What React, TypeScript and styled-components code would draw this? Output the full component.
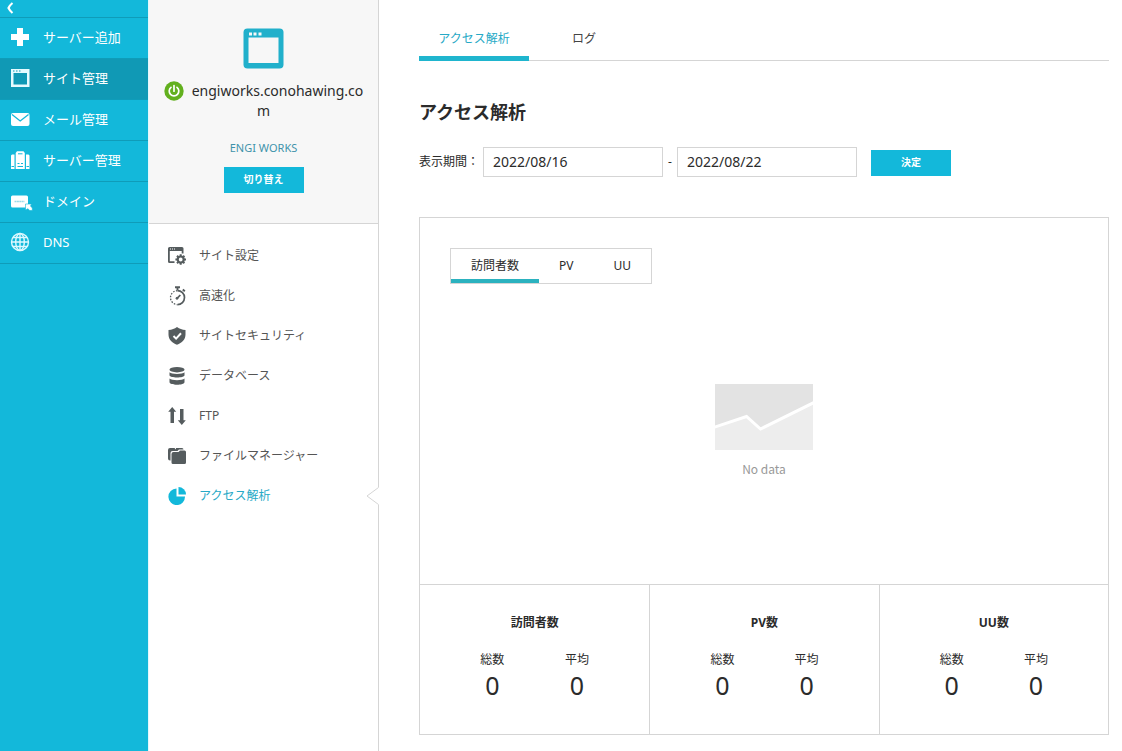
import React, { useState } from "react";
import styled, { createGlobalStyle, css } from "styled-components";

const cyan = "#13b8da";
const line = "#d5d5d5";

const GlobalStyle = createGlobalStyle`
  *, *::before, *::after { box-sizing: border-box; }
  body {
    margin: 0;
    background: #fff;
    color: #2b2b2b;
    font-family: "Noto Sans", "Noto Sans CJK JP", sans-serif;
    font-size: 12px;
    line-height: 20px;
  }
  button, input { font: inherit; color: inherit; }
  a { color: inherit; text-decoration: none; }
  svg { display: block; flex: none; }
  ul, h1, h2, dl, dd, p { margin: 0; padding: 0; }
  ul { list-style: none; }
`;

const Page = styled.div`
  display: flex;
  min-height: 100vh;
`;

const Sidebar = styled.nav`
  flex: none;
  width: 148px;
  background: ${cyan};
  color: #fff;
`;

const CollapseButton = styled.button`
  display: flex;
  align-items: center;
  width: 100%;
  height: 18px;
  padding: 0 6px 2px;
  border: 0;
  border-bottom: 1px solid #0f9cb9;
  background: none;
  color: #fff;
`;

const SidebarLink = styled.a<{ $active?: boolean }>`
  display: flex;
  align-items: center;
  gap: 12px;
  height: 41px;
  padding: 0 0 2px 10px;
  border-bottom: 1px solid #0f9cb9;
  background: ${(p) => (p.$active ? "#1099b5" : "transparent")};
  font-size: 13px;
`;

const SitePanel = styled.aside`
  flex: none;
  width: 231px;
  border-left: 1px solid #e3f8fd;
  border-right: 1px solid ${line};
`;

const SiteHeader = styled.header`
  display: flex;
  flex-direction: column;
  align-items: center;
  height: 224px;
  padding: 28px 12px 0;
  border-bottom: 1px solid ${line};
  background: #f7f7f7;
`;

const SiteName = styled.p`
  width: 100%;
  margin-top: 12px;
  font-size: 14px;
  text-align: center;
  word-break: break-all;
`;

const Power = styled.span`
  display: inline-block;
  margin-right: 8px;
  vertical-align: top;
`;

const Owner = styled.a`
  margin-top: 17px;
  color: #3f93ab;
  font-size: 11px;
`;

const SolidButton = styled.button`
  width: 80px;
  height: 26px;
  padding: 0 0 2px;
  border: 0;
  background: ${cyan};
  color: #fff;
  font-size: 10px;
  font-weight: 700;
`;

const SwitchButton = styled(SolidButton)`
  margin-top: 9px;
`;

const SiteMenu = styled.ul`
  padding-top: 12px;
`;

const SiteMenuItem = styled.li`
  position: relative;
`;

const SiteMenuLink = styled.a<{ $active?: boolean }>`
  display: flex;
  align-items: center;
  gap: 13px;
  height: 40px;
  padding-left: 19px;
  color: ${(p) => (p.$active ? "#27a9c6" : "#555")};

  svg { color: ${(p) => (p.$active ? cyan : "#555c5e")}; }
`;

const Notch = styled.svg`
  position: absolute;
  top: 10px;
  right: -1px;
`;

const Main = styled.main`
  flex: 1;
  min-width: 0;
  padding: 16px 13px 16px 40px;
`;

const Tabs = styled.nav`
  display: flex;
  height: 45px;
  border-bottom: 1px solid ${line};
`;

const Tab = styled.a<{ $active?: boolean }>`
  width: 110px;
  height: 45px;
  line-height: 46px;
  text-align: center;
  color: #444;
  ${(p) =>
    p.$active &&
    css`
      color: #27a9c6;
      border-bottom: 5px solid #1fb5ce;
    `}
`;

const Title = styled.h1`
  margin-top: 38px;
  font-size: 18px;
  line-height: 26px;
`;

const PeriodForm = styled.form`
  display: flex;
  align-items: center;
  margin-top: 22px;
`;

const PeriodLabel = styled.label`
  width: 64px;
`;

const DateInput = styled.input`
  width: 180px;
  height: 30px;
  padding: 0 9px 2px;
  border: 1px solid ${line};
  background: #fff;
  font-size: 14px;
`;

const Dash = styled.span`
  width: 14px;
  text-align: center;
`;

const SubmitButton = styled(SolidButton)`
  margin: 2px 0 0 14px;
`;

const Card = styled.section`
  margin-top: 40px;
  border: 1px solid ${line};
`;

const ChartArea = styled.div`
  height: 366px;
  padding: 30px;
`;

const MetricTabs = styled.div`
  display: inline-flex;
  height: 36px;
  border: 1px solid ${line};
`;

const MetricTab = styled.button<{ $active: boolean }>`
  padding: 0 20px;
  border: 0;
  border-top: 4px solid transparent;
  border-bottom: 4px solid ${(p) => (p.$active ? "#2bb2bf" : "transparent")};
  background: none;
`;

const Empty = styled.div`
  display: flex;
  flex-direction: column;
  align-items: center;
  gap: 9px;
  margin-top: 100px;
  color: #999;
  font-family: "Noto Sans CJK JP", sans-serif;
`;

const Stats = styled.div`
  display: grid;
  grid-template-columns: repeat(3, 1fr);
  border-top: 1px solid ${line};
`;

const Stat = styled.section`
  padding: 28px 30px 34px;
  text-align: center;

  & + & { border-left: 1px solid ${line}; }
`;

const StatTitle = styled.h2`
  font-size: 12px;
  line-height: 20px;
`;

const StatValues = styled.dl`
  display: grid;
  grid-template-columns: 1fr 1fr;
  margin-top: 17px;
`;

const StatNumber = styled.dd`
  font-size: 25px;
  line-height: 30px;
`;

const PlusIcon = () => (
  <svg width="21" height="20" viewBox="0 0 21 20" aria-hidden="true">
    <path d="M7 1h6v6h6v6h-6v6H7v-6H1V7h6z" fill="#fff" />
  </svg>
);

const WindowIcon = () => (
  <svg width="21" height="20" viewBox="0 0 21 20" aria-hidden="true">
    <path fillRule="evenodd" d="M1 1h18.500v18H1zM3.500 5v11.500H17V5z" fill="#e6fbff" />
    <path d="M3 3h1.500M6 3h1.500M9 3h1.500" stroke="#1099b5" strokeWidth="1.200" />
  </svg>
);

const MailIcon = () => (
  <svg width="21" height="20" viewBox="0 0 21 20" aria-hidden="true">
    <rect x="1" y="4" width="18.500" height="13" rx="2" fill="#fff" />
    <path d="M2 5.500l8.200 6.500 8.300-6.500" fill="none" stroke={cyan} strokeWidth="1.300" />
  </svg>
);

const ServerIcon = () => (
  <svg width="21" height="20" viewBox="0 0 21 20" aria-hidden="true">
    <path d="M7 1.200h6.500l1.300 1.800v16H5.700V3zM1 5.500l1-1h2.500V19H1zM16 4.500h2.500l1 1V19H16z" fill="#fff" />
    <path d="M8 3.800h4.500M7.500 13.500h2M11 13.500h2M7.500 16.500h5.500M1.500 16.500h2.500M16.500 16.500H19" stroke={cyan} strokeWidth="1" />
  </svg>
);

const DomainIcon = () => (
  <svg width="21" height="20" viewBox="0 0 21 20" overflow="visible" aria-hidden="true">
    <rect x="1" y="4.500" width="17" height="12" rx="1.500" fill="#fff" />
    <path d="M4.500 10.500H14.500" fill="none" stroke="#9adbe8" strokeWidth="1.300" strokeDasharray="2 .400" />
    <path d="M15.500 13h6l-1 2 1.800 2v2.500h-2.500l-2-1.800-2.300 1.300z" fill="#fff" stroke={cyan} strokeWidth=".600" />
  </svg>
);

const GlobeIcon = () => (
  <svg width="21" height="20" viewBox="0 0 21 20" fill="none" stroke="#dff9ff" strokeWidth="1.400" aria-hidden="true">
    <circle cx="10" cy="10" r="8.500" />
    <ellipse cx="10" cy="10" rx="4.300" ry="8.500" />
    <path d="M10 1.500v17M1.500 10h17M3 5.500h14M3 14.500h14" />
  </svg>
);

const SiteIcon = () => (
  <svg width="41" height="41" viewBox="0 0 41 41" aria-hidden="true">
    <rect x=".500" y=".500" width="40" height="40" rx="4" fill="#21b0cb" />
    <path d="M5.500 9.500h30V35h-30z" fill="#f7f7f7" />
    <path d="M6 4.500h3v3H6zM10.500 4.500h3v3h-3zM15.500 4.500h3v3h-3z" fill="#f7f7f7" />
  </svg>
);

const PowerIcon = () => (
  <svg width="20" height="20" viewBox="0 0 20 20" aria-hidden="true">
    <circle cx="10" cy="10" r="9.700" fill="#62b01e" />
    <path d="M7 6.300a4.800 4.800 0 1 0 6 0M10 4.500v5.700" fill="none" stroke="#fff" strokeWidth="1.700" strokeLinecap="round" />
  </svg>
);

const GearWindowIcon = () => (
  <svg width="18" height="18" viewBox="0 0 18 18" overflow="visible" fill="currentColor" aria-hidden="true">
    <path d="M0 1.500Q0 0 1.500 0H14q1.500 0 1.500 1.500V6.500h-1.800V4H1.800V14.200h4.700V16h-5Q0 16 0 14.500z" />
    <path d="M2 2h1M4 2h1M6 2h1" stroke="#fff" />
    <circle cx="12.700" cy="12.500" r="3" fill="none" stroke="currentColor" strokeWidth="2.200" />
    <path d="M12.700 7.200v2M12.700 15.800v2M7.400 12.500h2M16 12.500h2M9 8.800l1.300 1.300M15.100 14.900l1.300 1.300M16.400 8.800l-1.300 1.300M10.300 14.900L9 16.200" stroke="currentColor" strokeWidth="2" />
  </svg>
);

const StopwatchIcon = () => (
  <svg width="18" height="18" viewBox="0 0 18 18" overflow="visible" fill="none" stroke="currentColor" aria-hidden="true">
    <path d="M9.500 3.600a7 7 0 0 1 0 14" strokeWidth="1.700" />
    <path d="M9.500 3.600a7 7 0 0 0 0 14" strokeWidth="1.300" strokeDasharray="1.600 1.400" />
    <path d="M7 .3h5M9.500 0v3M14.800 2.500l2 1.800" strokeWidth="1.900" />
    <path d="M12.300 8L9 11.500" strokeWidth="1.800" />
    <circle cx="9" cy="11.300" r="1" fill="currentColor" />
  </svg>
);

const ShieldIcon = () => (
  <svg width="18" height="18" viewBox="0 0 18 18" aria-hidden="true">
    <path d="M9 0c2.500 1.800 5 2.700 8.500 3v4.500c0 5-3.500 8.200-8.500 10.300C4 15.700.5 12.500.5 7.500V3C4 2.700 6.500 1.800 9 0z" fill="currentColor" />
    <path d="M5.500 9l2.600 2.600L13 6.300" fill="none" stroke="#fff" strokeWidth="2" />
  </svg>
);

const DatabaseIcon = () => (
  <svg width="18" height="18" viewBox="0 0 18 18" fill="currentColor" aria-hidden="true">
    <ellipse cx="9" cy="2.700" rx="7.500" ry="2.700" />
    <path d="M1.500 5.200c2 2.300 13 2.300 15 0v3c0 3-15 3-15 0zM1.500 11.500c2 2.300 13 2.300 15 0v3.500c0 3.700-15 3.700-15 0z" />
  </svg>
);

const TransferIcon = () => (
  <svg width="18" height="18" viewBox="0 0 18 18" fill="currentColor" aria-hidden="true">
    <path d="M4.200 0l4 4.700H6V16H2.500V4.700H.2zM13.800 18l-4-4.700H12V2h3.500v11.300h2.300z" />
  </svg>
);

const FoldersIcon = () => (
  <svg width="18" height="18" viewBox="0 0 18 18" fill="currentColor" aria-hidden="true">
    <path d="M0 3Q0 1 2 1h4.500l1.500 1.500V1H14q1.500 0 1.500 1.500H11L9.500 4H4.500Q2.500 4 2.500 6v7.500H2Q0 13.500 0 11.500z" />
    <path d="M3.500 7q0-2 2-2h5L12 3.500h4.500Q18 3.500 18 5v10.500q0 1.500-1.500 1.500H5q-1.500 0-1.500-1.500z" />
  </svg>
);

const PieIcon = () => (
  <svg width="18" height="18" viewBox="0 0 18 18" fill="currentColor" aria-hidden="true">
    <path d="M8.500 1.500v8H17A8.300 8.300 0 1 1 8.500 1.500z" />
    <path d="M10.500 0A7.500 7.500 0 0 1 18 7.500h-7.500z" />
  </svg>
);

const NoDataGraphic = () => (
  <svg width="98" height="66" viewBox="0 0 98 66" aria-hidden="true">
    <path d="M0 0h98v66H0z" fill="#e3e3e3" />
    <path d="M0 43l31-10 14 12 53-26v47H0z" fill="#ededed" />
    <path d="M-1 43.300L31.500 32.500 45.500 45 99 18.500" fill="none" stroke="#fff" strokeWidth="3" />
  </svg>
);

const services = [
  { label: "サーバー追加", icon: <PlusIcon /> },
  { label: "サイト管理", icon: <WindowIcon />, active: true },
  { label: "メール管理", icon: <MailIcon /> },
  { label: "サーバー管理", icon: <ServerIcon /> },
  { label: "ドメイン", icon: <DomainIcon /> },
  { label: "DNS", icon: <GlobeIcon /> },
];

const siteMenu = [
  { label: "サイト設定", icon: <GearWindowIcon /> },
  { label: "高速化", icon: <StopwatchIcon /> },
  { label: "サイトセキュリティ", icon: <ShieldIcon /> },
  { label: "データベース", icon: <DatabaseIcon /> },
  { label: "FTP", icon: <TransferIcon /> },
  { label: "ファイルマネージャー", icon: <FoldersIcon /> },
  { label: "アクセス解析", icon: <PieIcon />, active: true },
];

const metrics = ["訪問者数", "PV", "UU"];

const stats = [
  { title: "訪問者数", total: 0, average: 0 },
  { title: "PV数", total: 0, average: 0 },
  { title: "UU数", total: 0, average: 0 },
];

export default function App() {
  const [metric, setMetric] = useState(metrics[0]);
  const [from, setFrom] = useState("2022/08/16");
  const [to, setTo] = useState("2022/08/22");

  return (
    <>
      <GlobalStyle />
      <Page>
        <Sidebar>
          <CollapseButton type="button" aria-label="メニューを閉じる">
            <svg width="8" height="12" viewBox="0 0 8 12" aria-hidden="true">
              <path d="M6.500 1Q4 3 2.500 6 4 9 6.500 11" fill="none" stroke="#fff" strokeWidth="2.200" />
            </svg>
          </CollapseButton>
          <ul>
            {services.map((s) => (
              <li key={s.label}>
                <SidebarLink href="#" $active={s.active}>
                  {s.icon}
                  {s.label}
                </SidebarLink>
              </li>
            ))}
          </ul>
        </Sidebar>

        <SitePanel>
          <SiteHeader>
            <SiteIcon />
            <SiteName>
              <Power>
                <PowerIcon />
              </Power>
              engiworks.conohawing.com
            </SiteName>
            <Owner href="#">ENGI WORKS</Owner>
            <SwitchButton type="button">切り替え</SwitchButton>
          </SiteHeader>
          <SiteMenu>
            {siteMenu.map((m) => (
              <SiteMenuItem key={m.label}>
                <SiteMenuLink href="#" $active={m.active}>
                  {m.icon}
                  {m.label}
                </SiteMenuLink>
                {m.active && (
                  <Notch width="13" height="20" viewBox="0 0 13 20" aria-hidden="true">
                    <path d="M13 1L1 10l12 9z" fill="#fff" />
                    <path d="M12.500 1.500L1 10l11.500 8.500" fill="none" stroke={line} />
                  </Notch>
                )}
              </SiteMenuItem>
            ))}
          </SiteMenu>
        </SitePanel>

        <Main>
          <Tabs>
            <Tab href="#" $active>
              アクセス解析
            </Tab>
            <Tab href="#">ログ</Tab>
          </Tabs>

          <Title>アクセス解析</Title>

          <PeriodForm onSubmit={(e) => e.preventDefault()}>
            <PeriodLabel htmlFor="from">表示期間：</PeriodLabel>
            <DateInput id="from" type="text" value={from} onChange={(e) => setFrom(e.target.value)} />
            <Dash>-</Dash>
            <DateInput type="text" aria-label="終了日" value={to} onChange={(e) => setTo(e.target.value)} />
            <SubmitButton type="submit">決定</SubmitButton>
          </PeriodForm>

          <Card>
            <ChartArea>
              <MetricTabs>
                {metrics.map((m) => (
                  <MetricTab key={m} type="button" $active={m === metric} onClick={() => setMetric(m)}>
                    {m}
                  </MetricTab>
                ))}
              </MetricTabs>
              <Empty>
                <NoDataGraphic />
                No data
              </Empty>
            </ChartArea>
            <Stats>
              {stats.map((s) => (
                <Stat key={s.title}>
                  <StatTitle>{s.title}</StatTitle>
                  <StatValues>
                    <div>
                      <dt>総数</dt>
                      <StatNumber>{s.total}</StatNumber>
                    </div>
                    <div>
                      <dt>平均</dt>
                      <StatNumber>{s.average}</StatNumber>
                    </div>
                  </StatValues>
                </Stat>
              ))}
            </Stats>
          </Card>
        </Main>
      </Page>
    </>
  );
}
